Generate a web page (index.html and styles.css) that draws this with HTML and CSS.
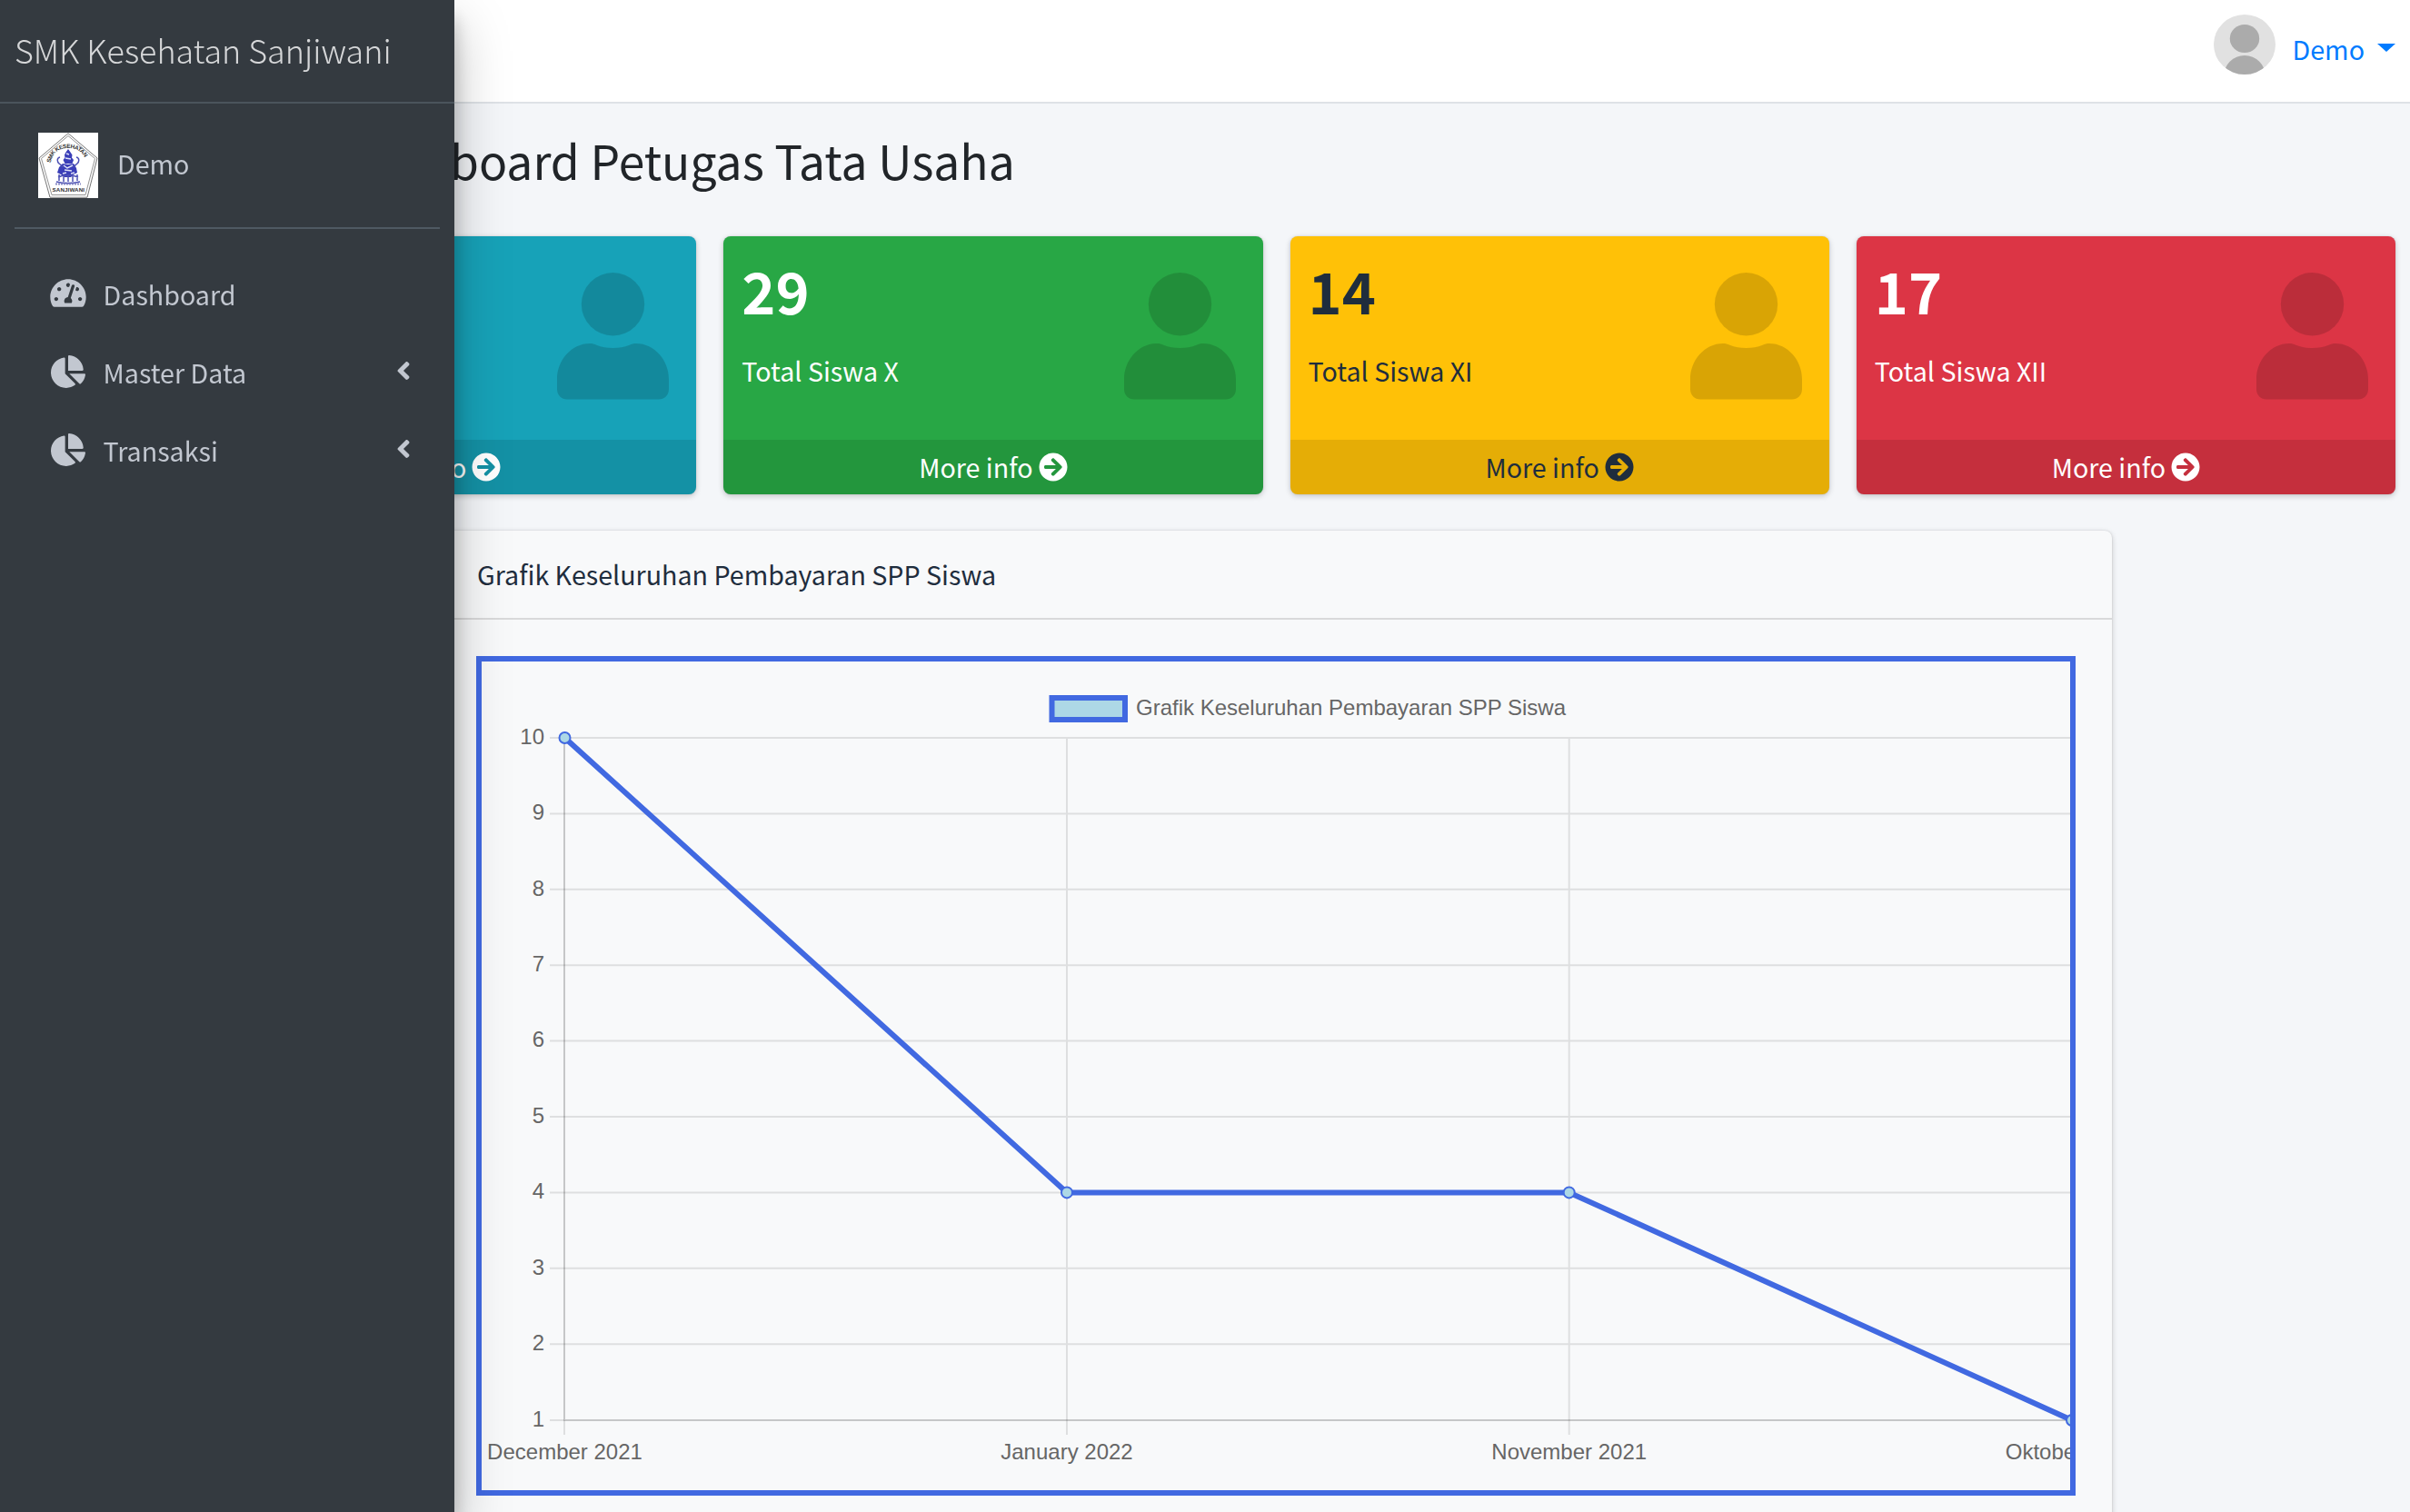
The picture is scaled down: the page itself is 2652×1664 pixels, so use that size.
FILE: index.html
```html
<!DOCTYPE html>
<html lang="id">
<head>
<meta charset="utf-8">
<title>Dashboard Petugas Tata Usaha</title>
<link rel="stylesheet" href="styles.css">
</head>
<body>
<svg class="sprite" aria-hidden="true">
  <symbol id="i-gauge" viewBox="0 0 576 512"><path d="M288 32C128.94 32 0 160.94 0 320c0 52.8 14.25 102.26 39.06 144.8 5.61 9.62 16.3 15.2 27.44 15.2h443c11.14 0 21.83-5.58 27.44-15.2C561.75 422.26 576 372.8 576 320c0-159.06-128.94-288-288-288zm0 64c14.71 0 26.58 10.13 30.32 23.65-1.11 2.26-2.64 4.23-3.45 6.67l-9.22 27.67c-5.13 3.49-10.97 6.01-17.64 6.01-17.67 0-32-14.33-32-32S270.33 96 288 96zM96 384c-17.67 0-32-14.33-32-32s14.33-32 32-32 32 14.33 32 32-14.33 32-32 32zm48-160c-17.67 0-32-14.33-32-32s14.33-32 32-32 32 14.33 32 32-14.33 32-32 32zm246.77-72.41l-61.33 184C343.13 347.33 352 364.54 352 384c0 11.72-3.38 22.55-8.88 32H232.88c-5.5-9.45-8.88-20.28-8.88-32 0-33.94 26.5-61.43 59.9-63.59l61.34-184.01c4.17-12.56 17.73-19.45 30.36-15.17 12.57 4.19 19.35 17.79 15.17 30.36zm14.66 57.2l15.52-46.55c3.47-1.29 7.13-2.23 11.05-2.23 17.67 0 32 14.33 32 32s-14.33 32-32 32c-11.38-.01-20.89-6.28-26.57-15.22zM480 384c-17.67 0-32-14.33-32-32s14.33-32 32-32 32 14.33 32 32-14.33 32-32 32z"/></symbol>
  <symbol id="i-pie" viewBox="0 0 544 512"><path d="M527.79 288H290.5l158.03 158.03c6.04 6.04 15.98 6.53 22.19.68 38.7-36.46 65.32-85.61 73.13-140.86 1.34-9.46-6.51-17.85-16.06-17.85zm-15.83-64.8C503.72 103.74 408.26 8.28 288.8.04 279.68-.59 272 7.1 272 16.24V240h223.77c9.14 0 16.82-7.68 16.19-16.8zM224 288V50.71c0-9.55-8.39-17.4-17.84-16.06C86.99 51.49-4.1 155.6.14 280.37 4.5 408.51 114.83 513.59 243.03 511.98c50.4-.63 96.97-16.87 135.26-44.03 7.9-5.6 8.42-17.23 1.57-24.08L224 288z"/></symbol>
  <symbol id="i-angle" viewBox="0 0 256 512"><path d="M31.7 239l136-136c9.4-9.4 24.6-9.4 33.9 0l22.6 22.6c9.4 9.4 9.4 24.6 0 33.9L127.9 256l96.4 96.4c9.4 9.4 9.4 24.6 0 33.9L201.7 409c-9.4 9.4-24.6 9.4-33.9 0l-136-136c-9.5-9.4-9.5-24.6-.1-34z"/></symbol>
  <symbol id="i-arrow" viewBox="0 0 512 512"><path d="M256 8c137 0 248 111 248 248S393 504 256 504 8 393 8 256 119 8 256 8zm-28.9 143.6l75.5 72.4H120c-13.3 0-24 10.7-24 24v16c0 13.3 10.7 24 24 24h182.6l-75.5 72.4c-9.7 9.3-9.9 24.8-.4 34.3l11 10.9c9.4 9.4 24.6 9.4 33.9 0L404.3 273c9.4-9.4 9.4-24.6 0-33.9L271.6 106.3c-9.4-9.4-24.6-9.4-33.9 0l-11 10.9c-9.5 9.6-9.3 25.1.4 34.4z"/></symbol>
  <symbol id="i-person" viewBox="0 0 123 140"><circle cx="61.5" cy="34.7" r="34.7"/><path d="M36 78c3 0 5 .6 7.500 1.700 5.500 2.300 11.500 3.300 18 3.300s12.500-1 18-3.300c2.500-1.100 4.500-1.700 7.500-1.700 20.500 0 36 19 36 39v11.500c0 6.500-5 11-11 11h-101c-6 0-11-4.500-11-11V117c0-20 15.500-39 36-39z"/></symbol>
</svg>

<aside class="sidebar">
  <div class="brand">SMK Kesehatan Sanjiwani</div>
  <div class="user-panel">
    <svg class="school-logo" viewBox="0 0 66 72">
      <rect width="66" height="72" fill="#fff"/>
      <path d="M33 .8 65 28 54 71.200H13L1 28z" fill="#fff" stroke="#777" stroke-width="1"/>
      <path d="M33 3.500 62.500 28.500 52 68.500H15L3.500 28.500z" fill="none" stroke="#888" stroke-width=".9"/>
      <path id="arc" d="M13.500 33.500Q17 17 33 17T53.500 33.500" fill="none"/>
      <text class="logo-text" font-size="6.400"><textPath href="#arc" textLength="50">SMK KESEHATAN</textPath></text>
      <g fill="#3a3eb8">
        <path d="M33 18l2.500 3.500 2 3-.5 3 2 2.500-1.500 4h-8l-2-4 2-2.500-.5-3 1.500-3z"/>
        <path d="M27 34l6 1 6-1 3 5 1 5-4 2-3 3h-7l-4-3-4-2 2-6z"/>
      </g>
      <path d="M24 27c-4 1-3 5-1 7s4 2 4 4M42 27c4 1 3 5 1 7s-3 2-4 4M22 49c6-3 15-3 22 0M20 54c8 2 18 2 26 0M23 46v7M28 47v7M33 47v7M38 47v7M43 46v7" fill="none" stroke="#4c50b4" stroke-width="1.500"/>
      <path d="M28 36l4 3 6-3M29 41l8 1M30 28l6 1M31 23l3 1M27 45l4-1M36 45l4-1" stroke="#dfe2f7" stroke-width="1.400" fill="none"/>
      <path d="M19 56.500h28" stroke="#8588c4" stroke-width="2" stroke-dasharray="2 1"/>
      <text class="logo-text" x="15.500" y="64.500" font-size="6.200" textLength="35.500">SANJIWANI</text>
    </svg>
    <span>Demo</span>
  </div>
  <nav class="menu">
    <a class="menu-item"><svg class="mi-gauge"><use href="#i-gauge"/></svg><span>Dashboard</span></a>
    <a class="menu-item"><svg class="mi-pie"><use href="#i-pie"/></svg><span>Master Data</span><svg class="mi-angle"><use href="#i-angle"/></svg></a>
    <a class="menu-item"><svg class="mi-pie"><use href="#i-pie"/></svg><span>Transaksi</span><svg class="mi-angle"><use href="#i-angle"/></svg></a>
  </nav>
</aside>

<header class="topbar">
  <svg class="avatar" viewBox="0 0 68 66"><defs><clipPath id="av"><ellipse cx="34" cy="33" rx="34" ry="33"/></clipPath></defs>
    <g clip-path="url(#av)"><rect width="68" height="66" fill="#e1e1e1"/><ellipse cx="34" cy="26.500" rx="16.200" ry="15.600" fill="#ababab"/><ellipse cx="34" cy="68" rx="23" ry="23" fill="#ababab"/></g></svg>
  <span class="account">Demo</span><i class="caret"></i>
</header>

<main class="content">
  <h1>Dashboard Petugas Tata Usaha</h1>
  <section class="stats">
    <article class="box info"><div class="inner"><h3>60</h3><p>Total Siswa</p><svg class="person"><use href="#i-person"/></svg></div><a class="more">More info <svg><use href="#i-arrow"/></svg></a></article>
    <article class="box success"><div class="inner"><h3>29</h3><p>Total Siswa X</p><svg class="person"><use href="#i-person"/></svg></div><a class="more">More info <svg><use href="#i-arrow"/></svg></a></article>
    <article class="box warning"><div class="inner"><h3>14</h3><p>Total Siswa XI</p><svg class="person"><use href="#i-person"/></svg></div><a class="more">More info <svg><use href="#i-arrow"/></svg></a></article>
    <article class="box danger"><div class="inner"><h3>17</h3><p>Total Siswa XII</p><svg class="person"><use href="#i-person"/></svg></div><a class="more">More info <svg><use href="#i-arrow"/></svg></a></article>
  </section>
  <section class="card">
    <div class="card-header">Grafik Keseluruhan Pembayaran SPP Siswa</div>
    <div class="card-body">
      <svg class="chart" viewBox="530 728 1748 912">
        <path class="grid" d="M605 812H2278M605 895.400H2278M605 978.800H2278M605 1062.200H2278M605 1145.600H2278M605 1229H2278M605 1312.400H2278M605 1395.800H2278M605 1479.200H2278M605 1563H621M621 1563V1579M1174 811V1579M1726.700 811V1579"/>
        <path class="axis" d="M621 811V1564M622 1563H2278"/>
        <rect x="1157.500" y="768" width="80.500" height="24" fill="#add8e6" stroke="#4169e1" stroke-width="6"/>
        <text x="1250" y="787" textLength="473">Grafik Keseluruhan Pembayaran SPP Siswa</text>
        <g text-anchor="end">
          <text x="599" y="819">10</text><text x="599" y="902">9</text><text x="599" y="986">8</text><text x="599" y="1069">7</text><text x="599" y="1152">6</text><text x="599" y="1236">5</text><text x="599" y="1319">4</text><text x="599" y="1403">3</text><text x="599" y="1486">2</text><text x="599" y="1570">1</text>
        </g>
        <g text-anchor="middle">
          <text x="621.500" y="1606">December 2021</text><text x="1174" y="1606">January 2022</text><text x="1726.700" y="1606">November 2021</text><text x="2279.500" y="1606">Oktober 2021</text>
        </g>
        <path d="M621.500 812L1174 1312.400H1726.700L2280 1563" fill="none" stroke="#4169e1" stroke-width="6"/>
        <g fill="#add8e6" stroke="#4169e1" stroke-width="2"><circle cx="621.500" cy="812" r="6"/><circle cx="1174" cy="1312.400" r="6"/><circle cx="1726.700" cy="1312.400" r="6"/><circle cx="2280" cy="1563" r="6"/></g>
      </svg>
    </div>
  </section>
</main>
</body>
</html>
```
FILE: styles.css
```css
* { box-sizing: border-box; }
body {
  margin: 0;
  height: 1664px;
  overflow: hidden;
  background: #f4f6f9;
  color: #212529;
  font: 400 28.65px/48px "Noto Sans CJK JP", "Noto Sans CJK SC", sans-serif;
}
h1, h3, p { margin: 0; }
.sprite { display: none; }
svg { fill: currentColor; display: block; flex: none; }

/* Sidebar slides over the page content */
.sidebar {
  position: fixed;
  inset: 0 auto 0 0;
  z-index: 10;
  width: 500px;
  background: #343a40;
  color: #c2c7d0;
  box-shadow: 0 28px 56px rgba(0,0,0,.25), 0 20px 20px rgba(0,0,0,.22);
}
.brand {
  height: 114px;
  padding: 24px 16px 0;
  border-bottom: 2px solid #4b545c;
  color: rgba(255,255,255,.8);
  font-size: 35.9px;
  font-weight: 300;
  line-height: 60px;
  white-space: nowrap;
}
.user-panel {
  display: flex;
  align-items: center;
  gap: 21px;
  height: 138px;
  margin: 0 16px;
  padding: 0 26px;
  border-bottom: 2px solid #4f5962;
}
.user-panel span { padding-bottom: 4px; }
.school-logo { width: 66px; height: 72px; }
.logo-text { fill: #333; font-family: "Liberation Sans", sans-serif; font-weight: 700; }
.menu {
  display: flex;
  flex-direction: column;
  gap: 6px;
  padding: 32px 16px;
}
.menu-item {
  display: flex;
  align-items: center;
  height: 80px;
  padding: 0 32px 0 39px;
}
.menu-item span { margin-left: 18.600px; }
.mi-gauge { width: 40px; height: 35px; margin-top: -3px; }
.mi-pie { width: 38px; height: 36px; margin: -2px 1px 0; }
.mi-angle { width: 16px; height: 32px; margin: -4px 0 0 auto; }

.topbar {
  display: flex;
  align-items: flex-start;
  height: 114px;
  padding: 16px 16px 0 0;
  justify-content: flex-end;
  background: #fff;
  border-bottom: 2px solid #dee2e6;
  color: #007bff;
}
.avatar { width: 68px; height: 66px; }
.account { margin: 14px 0 0 19px; }
.caret {
  margin: 32px 0 0 14px;
  border: 10px solid transparent;
  border-top: 9px solid #007bff;
  border-bottom: 0;
}

.content { padding: 0 16px 0 173px; }
h1 {
  height: 146px;
  padding: 27px 0 0 202px;
  font-size: 51.6px;
  font-weight: 400;
  line-height: 70px;
}
.stats {
  display: grid;
  grid-template-columns: repeat(4, 1fr);
  gap: 30px;
}
.box {
  height: 284px;
  overflow: hidden;
  border-radius: 8px;
  color: #fff;
  box-shadow: 0 0 2px rgba(0,0,0,.125), 0 2px 6px rgba(0,0,0,.2);
}
.info { background: #17a2b8; }
.success { background: #28a745; }
.warning { background: #ffc107; color: #1f2d3d; }
.danger { background: #dc3545; }
.inner { position: relative; height: 224px; padding: 20px 20px 0; }
.inner h3 { font-size: 63px; font-weight: 700; line-height: 78px; }
.inner p { margin-top: 26px; }
/* Decorative icon behind the figures */
.person {
  position: absolute;
  top: 40px;
  right: 30px;
  width: 123px;
  height: 140px;
  color: rgba(0,0,0,.15);
}
.more {
  display: flex;
  align-items: center;
  justify-content: center;
  gap: 6px;
  height: 60px;
  background: rgba(0,0,0,.1);
}
.more svg { width: 32px; height: 32px; }

.card {
  width: 1840px;
  height: 1120px;
  margin: 40px 0 0 311px;
  border-radius: 8px;
  background: #f8f9fa;
  color: #1f2d3d;
  box-shadow: 0 0 2px rgba(0,0,0,.125), 0 2px 6px rgba(0,0,0,.2);
}
.card-header {
  height: 98px;
  padding: 24px 41px;
  border-bottom: 2px solid rgba(0,0,0,.125);
}
.card-body { padding: 40px; }
.chart {
  box-sizing: content-box;
  width: 1748px;
  height: 912px;
  border: 6px solid #4169e1;
}
.chart text { fill: #666; font: 24px "Liberation Sans", Arial, sans-serif; }
.chart text, .axis { shape-rendering: auto; }
.grid { fill: none; stroke: rgba(0,0,0,.1); stroke-width: 2; }
.axis { fill: none; stroke: rgba(0,0,0,.2); stroke-width: 2; }
```
